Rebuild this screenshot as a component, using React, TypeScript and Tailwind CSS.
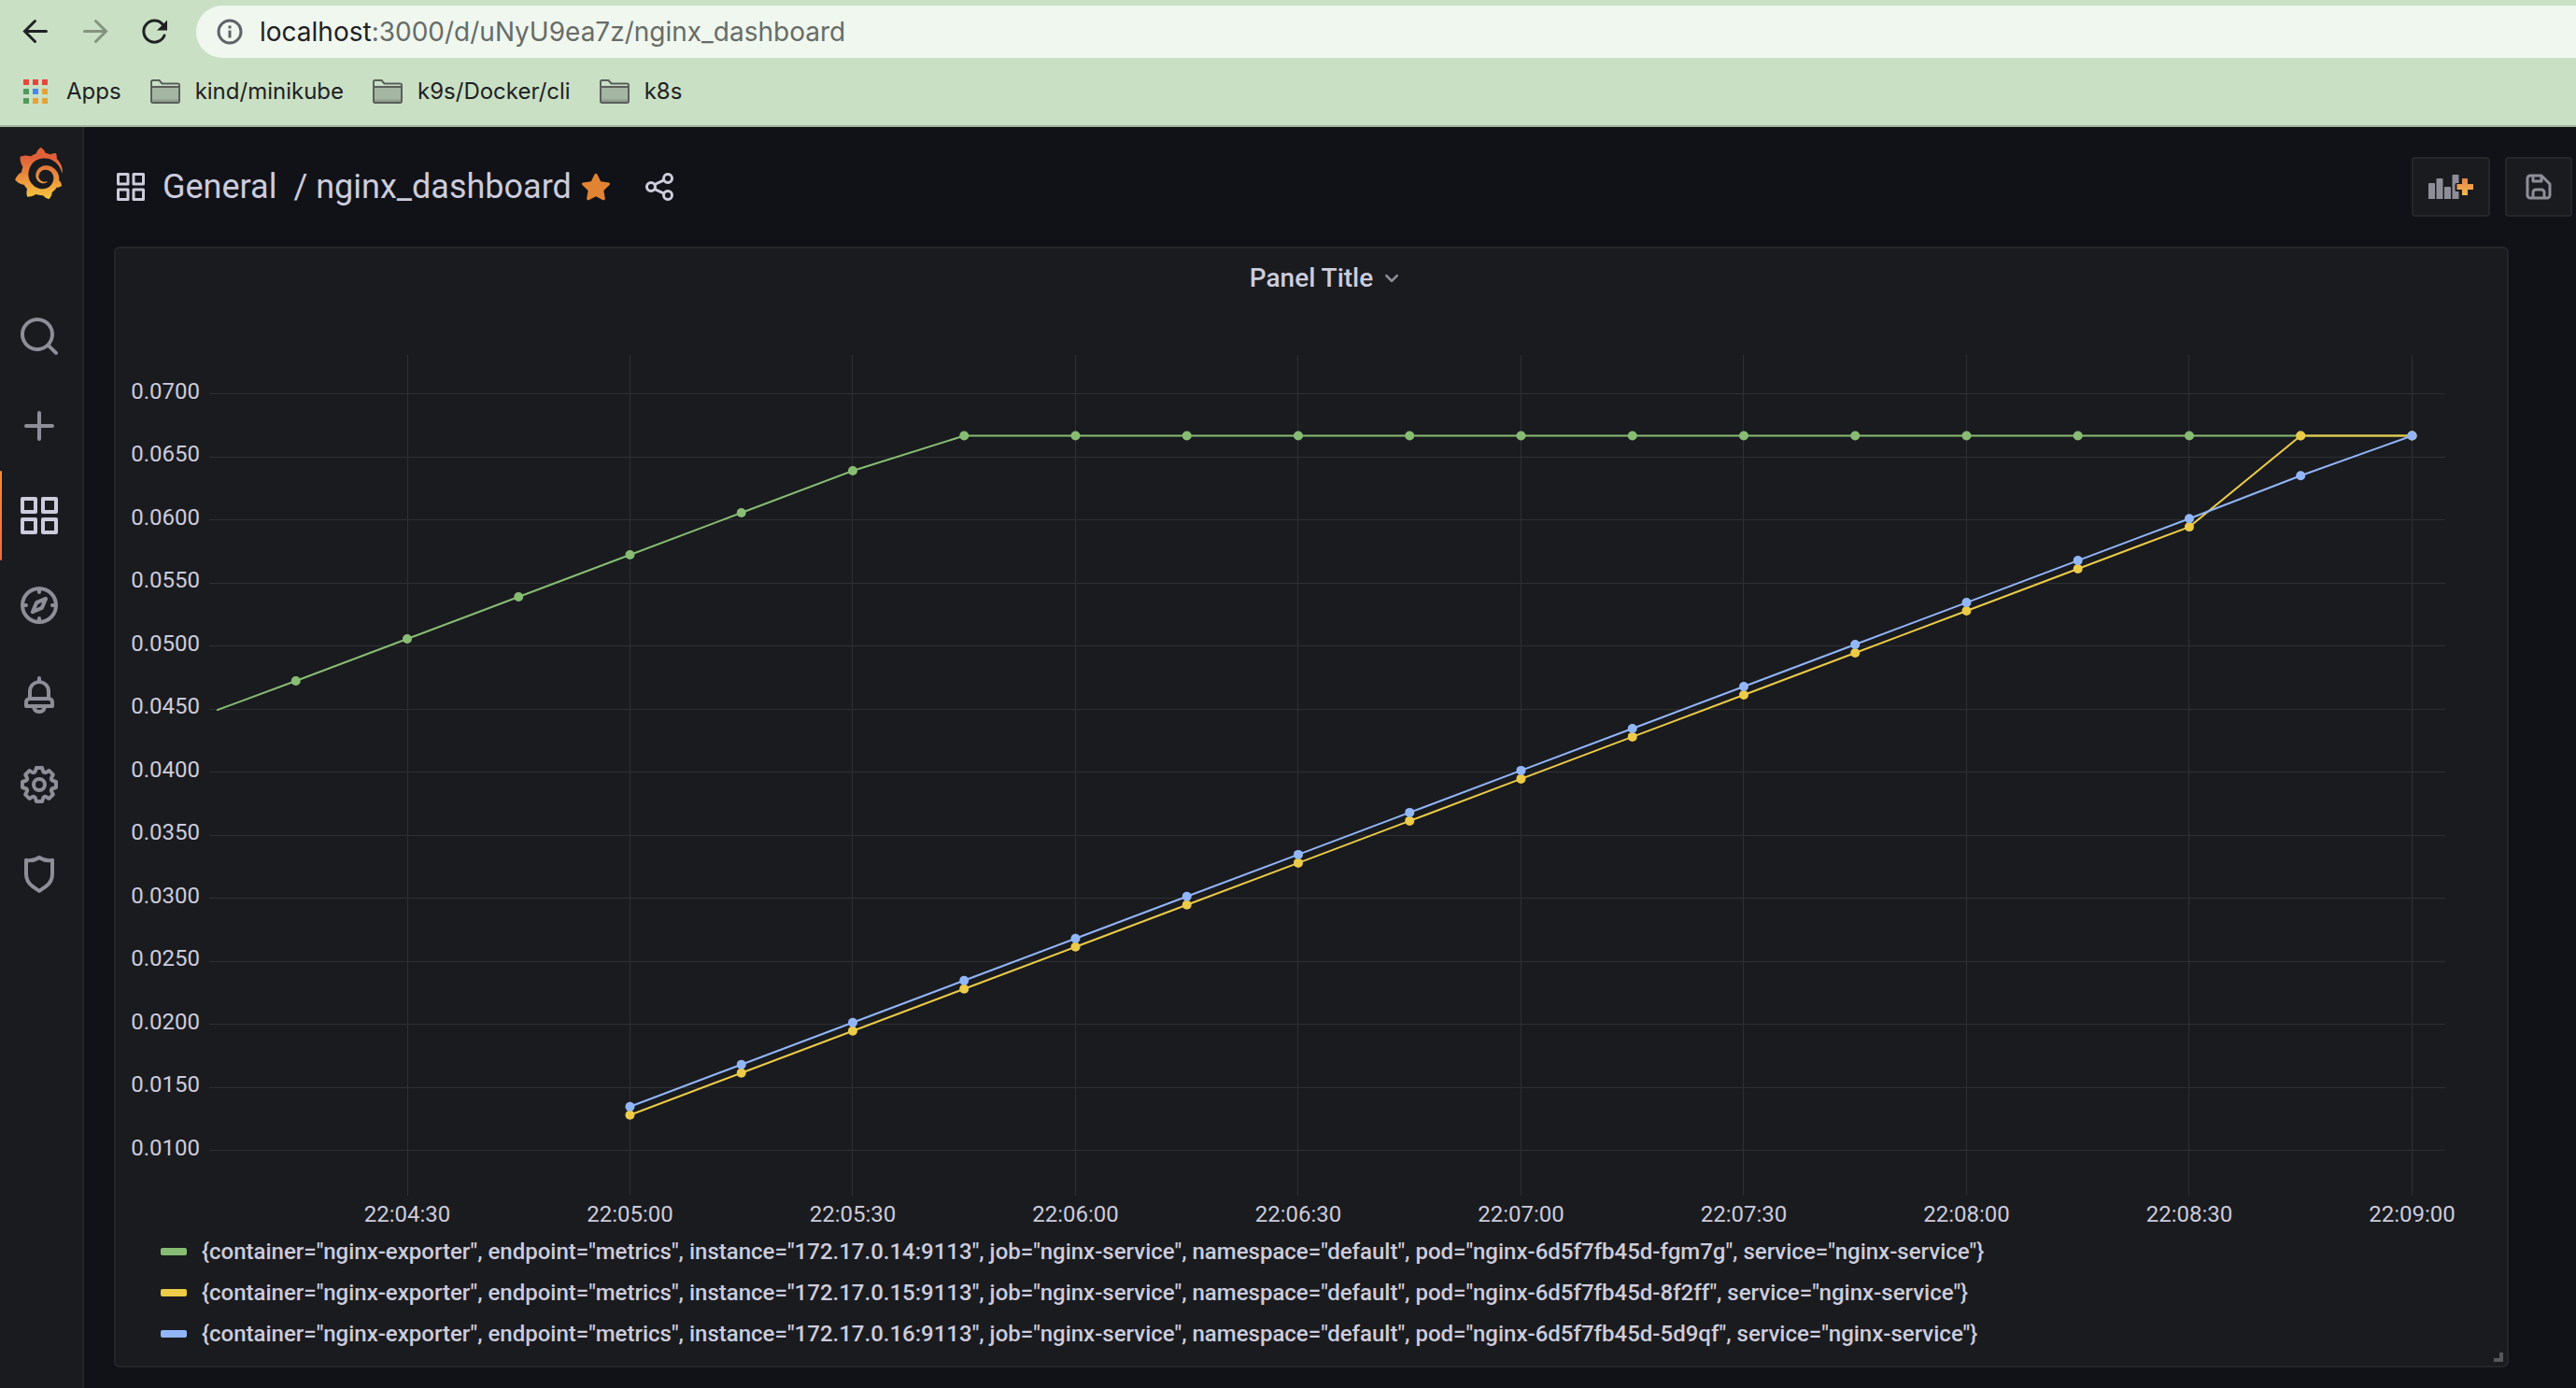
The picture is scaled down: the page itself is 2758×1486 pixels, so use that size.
import React from "react";
import { SiGrafana } from "react-icons/si";

const ICONS = {
  apps: "M10,13H3a1,1,0,0,0-1,1v7a1,1,0,0,0,1,1h7a1,1,0,0,0,1-1V14A1,1,0,0,0,10,13ZM9,20H4V15H9ZM21,2H14a1,1,0,0,0-1,1v7a1,1,0,0,0,1,1h7a1,1,0,0,0,1-1V3A1,1,0,0,0,21,2ZM20,9H15V4h5Zm1,4H14a1,1,0,0,0-1,1v7a1,1,0,0,0,1,1h7a1,1,0,0,0,1-1V14A1,1,0,0,0,21,13Zm-1,7H15V15h5ZM10,2H3A1,1,0,0,0,2,3v7a1,1,0,0,0,1,1h7a1,1,0,0,0,1-1V3A1,1,0,0,0,10,2ZM9,9H4V4H9Z",
  search:
    "M21.71,20.29,18,16.61A9,9,0,1,0,16.61,18l3.68,3.68a1,1,0,0,0,1.42,0A1,1,0,0,0,21.71,20.29ZM11,18a7,7,0,1,1,7-7A7,7,0,0,1,11,18Z",
  plus: "M19,11H13V5a1,1,0,0,0-2,0v6H5a1,1,0,0,0,0,2h6v6a1,1,0,0,0,2,0V13h6a1,1,0,0,0,0-2Z",
  compass:
    "M12,2A10,10,0,1,0,22,12,10,10,0,0,0,12,2Zm1,17.93V19a1,1,0,0,0-2,0v.93A8,8,0,0,1,4.07,13H5a1,1,0,0,0,0-2H4.07A8,8,0,0,1,11,4.07V5a1,1,0,0,0,2,0V4.07A8,8,0,0,1,19.93,11H19a1,1,0,0,0,0,2h.93A8,8,0,0,1,13,19.93ZM15.14,7.55l-5,2.12a1,1,0,0,0-.52.52l-2.12,5a1,1,0,0,0,.21,1.1,1,1,0,0,0,.7.3.93.93,0,0,0,.4-.09l5-2.12a1,1,0,0,0,.52-.52l2.12-5a1,1,0,0,0-1.31-1.31Zm-2.49,5.1-2.28,1,1-2.28,2.28-1Z",
  bell: "M18,13.18V10a6,6,0,0,0-5-5.91V3a1,1,0,0,0-2,0V4.09A6,6,0,0,0,6,10v3.18A3,3,0,0,0,4,16v2a1,1,0,0,0,1,1H8.14a4,4,0,0,0,7.72,0H19a1,1,0,0,0,1-1V16A3,3,0,0,0,18,13.18ZM8,10a4,4,0,0,1,8,0v3H8Zm4,10a2,2,0,0,1-1.72-1h3.44A2,2,0,0,1,12,20Zm6-3H6V16a1,1,0,0,1,1-1H17a1,1,0,0,1,1,1Z",
  cog: "M21.32,9.55l-1.89-.63.89-1.78A1,1,0,0,0,20.13,6L18,3.87a1,1,0,0,0-1.15-.19l-1.78.89-.63-1.89A1,1,0,0,0,13.5,2h-3a1,1,0,0,0-.95.68L8.92,4.57,7.14,3.68A1,1,0,0,0,6,3.87L3.87,6a1,1,0,0,0-.19,1.15l.89,1.78-1.89.63A1,1,0,0,0,2,10.5v3a1,1,0,0,0,.68.95l1.89.63-.89,1.78A1,1,0,0,0,3.87,18L6,20.13a1,1,0,0,0,1.15.19l1.78-.89.63,1.89a1,1,0,0,0,.95.68h3a1,1,0,0,0,.95-.68l.63-1.89,1.78.89A1,1,0,0,0,18,20.13L20.13,18a1,1,0,0,0,.19-1.15l-.89-1.78,1.89-.63A1,1,0,0,0,22,13.5v-3A1,1,0,0,0,21.32,9.55ZM20,12.78l-1.2.4A2,2,0,0,0,17.64,16l.57,1.14-1.1,1.1L16,17.64a2,2,0,0,0-2.79,1.16l-.4,1.2H11.22l-.4-1.2A2,2,0,0,0,8,17.64l-1.14.57-1.1-1.1L6.36,16A2,2,0,0,0,5.2,13.18L4,12.78V11.22l1.2-.4A2,2,0,0,0,6.36,8L5.79,6.89l1.1-1.1L8,6.36A2,2,0,0,0,10.82,5.2l.4-1.2h1.56l.4,1.2A2,2,0,0,0,16,6.36l1.14-.57,1.1,1.1L17.64,8a2,2,0,0,0,1.16,2.79l1.2.4ZM12,8a4,4,0,1,0,4,4A4,4,0,0,0,12,8Zm0,6a2,2,0,1,1,2-2A2,2,0,0,1,12,14Z",
  shield:
    "M19.63,3.65a1,1,0,0,0-.84-.2,8,8,0,0,1-6.22-1.27,1,1,0,0,0-1.14,0A8,8,0,0,1,5.21,3.45a1,1,0,0,0-.84.2A1,1,0,0,0,4,4.43v7.45a9,9,0,0,0,3.77,7.33l3.65,2.6a1,1,0,0,0,1.16,0l3.65-2.6A9,9,0,0,0,20,11.88V4.43A1,1,0,0,0,19.63,3.65ZM18,11.88a7,7,0,0,1-2.93,5.7L12,19.77,8.93,17.58A7,7,0,0,1,6,11.88V5.58a10,10,0,0,0,6-1.39,10,10,0,0,0,6,1.39Z",
  share:
    "M18,14a4,4,0,0,0-3.08,1.48l-5.1-2.35a3.64,3.64,0,0,0,0-2.26l5.1-2.35A4,4,0,1,0,14,6a4.17,4.17,0,0,0,.07.71L8.79,9.14a4,4,0,1,0,0,5.72l5.28,2.43A4.17,4.17,0,0,0,14,18a4,4,0,1,0,4-4ZM18,4a2,2,0,1,1-2,2A2,2,0,0,1,18,4ZM6,14a2,2,0,1,1,2-2A2,2,0,0,1,6,14Zm12,6a2,2,0,1,1,2-2A2,2,0,0,1,18,20Z",
  save: "M20.71,9.29l-6-6a1,1,0,0,0-.32-.21A1.09,1.09,0,0,0,14,3H6A3,3,0,0,0,3,6V18a3,3,0,0,0,3,3H18a3,3,0,0,0,3-3V10A1,1,0,0,0,20.71,9.29ZM9,5h4V7H9Zm6,14H9V16a1,1,0,0,1,1-1h4a1,1,0,0,1,1,1Zm4-1a1,1,0,0,1-1,1H17V16a3,3,0,0,0-3-3H10a3,3,0,0,0-3,3v3H6a1,1,0,0,1-1-1V6A1,1,0,0,1,6,5H7V8A1,1,0,0,0,8,9h6a1,1,0,0,0,1-1V6.41l4,4Z",
  angleDown:
    "M17,9.17a1,1,0,0,0-1.41,0L12,12.71,8.46,9.17a1,1,0,0,0-1.41,0,1,1,0,0,0,0,1.42l4.24,4.24a1,1,0,0,0,1.42,0L17,10.59A1,1,0,0,0,17,9.17Z",
  star: "M17.56 21.56a1 1 0 0 1-.46-.12L12 18.76l-5.1 2.68a1 1 0 0 1-1.45-1.05l.97-5.68-4.12-4.02a1 1 0 0 1 .55-1.7l5.7-.83 2.55-5.17a1.04 1.04 0 0 1 1.8 0l2.55 5.17 5.7.83a1 1 0 0 1 .55 1.7l-4.12 4.02.97 5.68a1 1 0 0 1-.99 1.17Z",
};

type IconName = keyof typeof ICONS;

function Icon({ name, className }: { name: IconName; className: string }) {
  return (
    <svg viewBox="0 0 24 24" fill="currentColor" aria-hidden="true" className={className}>
      <path d={ICONS[name]} />
    </svg>
  );
}

/* ---------- Browser chrome ---------- */

const APP_DOTS = ["#e8453c", "#e8453c", "#e8453c", "#4f9a5b", "#4688f1", "#e6a235", "#4f9a5b", "#e6a235", "#e6a235"];

function FolderIcon() {
  return (
    <svg viewBox="0 0 32 26" className="h-[26px] w-8" aria-hidden="true">
      <path d="M1 8V2.500A1.500 1.500 0 0 1 2.500 1h7L12.500 4.500h17A1.500 1.500 0 0 1 31 6V8" fill="none" stroke="#5b5e5b" strokeWidth="2" />
      <path d="M1 8h30V23.500A1.500 1.500 0 0 1 29.500 25H2.500A1.500 1.500 0 0 1 1 23.500Z" fill="#a5b6a3" stroke="#5b5e5b" strokeWidth="2" />
      <path d="M2 21.500h28V24H2Z" fill="#8f9e8d" />
    </svg>
  );
}

function BrowserChrome() {
  return (
    <header className="border-b-2 border-[#9fb29d] bg-[#c9e0c5] font-['Inter',sans-serif]">
      <div className="flex items-center pt-1.5">
        <div className="flex w-[210px] shrink-0 items-center gap-8 pl-[22px]">
          <button aria-label="Back" className="text-[#202124]">
            <svg viewBox="0 0 32 32" className="size-8" fill="none" stroke="currentColor" strokeWidth="3" strokeLinecap="round" aria-hidden="true">
              <path d="M27.500 15.500H5M15.500 4.500 4.500 15.500 15.500 26.500" />
            </svg>
          </button>
          <button aria-label="Forward" className="text-[#84937f]">
            <svg viewBox="0 0 32 32" className="size-8" fill="none" stroke="currentColor" strokeWidth="3" strokeLinecap="round" aria-hidden="true">
              <path d="M4.500 15.500H27M16.500 4.500 27.500 15.500 16.500 26.500" />
            </svg>
          </button>
          <button aria-label="Reload" className="text-[#202124]">
            <svg viewBox="0 0 32 32" className="size-8" aria-hidden="true">
              <path d="M26 20A11.500 11.500 0 1 1 24 8" fill="none" stroke="currentColor" strokeWidth="3" strokeLinecap="round" />
              <path d="M29 3.500v11H18Z" fill="currentColor" />
            </svg>
          </button>
        </div>
        <div className="flex h-14 grow items-center gap-[18px] rounded-l-full bg-[#f0f7ef] pl-[22px]">
          <svg viewBox="0 0 28 28" className="size-7" fill="none" stroke="#5f6368" strokeWidth="3" aria-hidden="true">
            <circle cx="14" cy="14" r="12" />
            <path d="M14 12.500v8M14 7.500v3" />
          </svg>
          <p className="text-[28px] leading-8 text-[#676c67]">
            <span className="text-[#202124]">localhost</span>:3000/d/uNyU9ea7z/nginx_dashboard
          </p>
        </div>
      </div>
      <nav aria-label="Bookmarks" className="flex h-[72px] items-center gap-[31px] pl-[25px] text-2xl text-[#202124]">
        <a href="#apps" className="flex items-center gap-5">
          <span className="grid grid-cols-3 gap-1">
            {APP_DOTS.map((color, i) => (
              <span key={i} className="size-1.5" style={{ backgroundColor: color }} />
            ))}
          </span>
          Apps
        </a>
        {["kind/minikube", "k9s/Docker/cli", "k8s"].map((label) => (
          <button key={label} className="flex items-center gap-4">
            <FolderIcon />
            {label}
          </button>
        ))}
      </nav>
    </header>
  );
}

/* ---------- Side menu ---------- */

const MENU: { icon: IconName; label: string; active?: boolean }[] = [
  { icon: "search", label: "Search" },
  { icon: "plus", label: "Create" },
  { icon: "apps", label: "Dashboards", active: true },
  { icon: "compass", label: "Explore" },
  { icon: "bell", label: "Alerting" },
  { icon: "cog", label: "Configuration" },
  { icon: "shield", label: "Server Admin" },
];

function SideMenu() {
  return (
    <nav aria-label="Main" className="w-[90px] shrink-0 border-r-2 border-[#25262a] bg-[#1a1b1f]">
      <a href="#home" aria-label="Grafana home" className="flex h-[176px] pt-[22px] pl-[14px]">
        <svg width="0" height="0" aria-hidden="true">
          <linearGradient id="flame" x1="0" y1="0" x2="0" y2="1">
            <stop offset="0.2" stopColor="#e0603a" />
            <stop offset="1" stopColor="#f5c63f" />
          </linearGradient>
        </svg>
        <SiGrafana className="size-[55px]" style={{ fill: "url(#flame)" }} />
      </a>
      <ul>
        {MENU.map(({ icon, label, active }) => (
          <li key={icon} className="relative">
            {active && <span className="absolute inset-y-0 left-0 w-0.5 rounded-sm bg-linear-to-b from-[#f08e3c] to-[#ee6a48]" />}
            <a
              href={"#" + icon}
              aria-label={label}
              className={"flex h-24 items-center pl-[18px] " + (active ? "text-[#ccccdc]" : "text-[#8e8e99]")}
            >
              <Icon name={icon} className="size-12" />
            </a>
          </li>
        ))}
      </ul>
    </nav>
  );
}

/* ---------- Toolbar ---------- */

function AddPanelIcon() {
  return (
    <svg viewBox="0 0 48 26" className="h-[26px] w-12" aria-hidden="true">
      <linearGradient id="add" x1="0" y1="0" x2="0" y2="1">
        <stop offset="0" stopColor="#e6814a" />
        <stop offset="1" stopColor="#f2bb4b" />
      </linearGradient>
      <path
        fill="#8e8e99"
        d="M1 9h5a1 1 0 0 1 1 1v16H0V10a1 1 0 0 1 1-1ZM9.500 4h5a1 1 0 0 1 1 1v21h-7V5a1 1 0 0 1 1-1ZM18 13h5a1 1 0 0 1 1 1v12h-7V14a1 1 0 0 1 1-1ZM26.500 0h5a1 1 0 0 1 1 1v8H30a1.500 1.500 0 0 0-1.500 1.500v6A1.500 1.500 0 0 0 30 18h2.500v8h-7V1a1 1 0 0 1 1-1Z"
      />
      <path fill="url(#add)" d="M36 4h6v6h6v6h-6v6h-6v-6h-5.500v-6H36Z" />
    </svg>
  );
}

function Toolbar() {
  return (
    <div className="flex h-32 items-center pr-1 pl-8 text-[#ccccdc]">
      <Icon name="apps" className="size-9" />
      <h1 className="flex gap-[18px] pl-4 text-[36px] leading-10">
        <a href="#general">General</a>
        <a href="#dashboard">/ nginx_dashboard</a>
      </h1>
      <button aria-label="Unmark as favorite" className="ml-2 text-[#e08433]">
        <Icon name="star" className="size-9" />
      </button>
      <button aria-label="Share dashboard" className="ml-8">
        <Icon name="share" className="size-9" />
      </button>
      <div className="ml-auto flex gap-4">
        <button aria-label="Add panel" className="flex h-16 w-[84px] items-center justify-center rounded border-2 border-[#25262a] bg-[#1a1b1f]">
          <AddPanelIcon />
        </button>
        <button
          aria-label="Save dashboard"
          className="flex h-16 w-[72px] items-center justify-center rounded border-2 border-[#25262a] bg-[#1a1b1f] text-[#8e8e99]"
        >
          <Icon name="save" className="size-9" />
        </button>
      </div>
    </div>
  );
}

/* ---------- Chart ---------- */

// Times are seconds after 22:04:30; one sample is taken every 15 seconds.
const T_START = -25.66;
const T_SPAN = 300.13;
const PLOT_W = 2386;
const PLOT_H = 900;
const STEP = 15;
const FULL = 0.06667;

const ramp = (from: number, to: number, count: number) =>
  Array.from({ length: count }, (_, i) => from + ((to - from) * i) / (count - 1));

const SERIES = [
  {
    color: "#87bd73",
    start: -15,
    lead: [T_START, 0.0449],
    values: [...ramp(0.04722, 0.06389, 6), ...Array<number>(14).fill(FULL)],
    pod: "fgm7g",
    ip: "172.17.0.14",
  },
  { color: "#eccb48", start: 30, values: [...ramp(0.0128, 0.05944, 15), FULL, FULL], pod: "8f2ff", ip: "172.17.0.15" },
  { color: "#92b6fa", start: 30, values: [...ramp(0.01347, 0.0601, 15), 0.0635, FULL], pod: "5d9qf", ip: "172.17.0.16" },
];

const fx = (t: number) => (t - T_START) / T_SPAN;
const pct = (t: number) => `${(fx(t) * 100).toFixed(3)}%`;
const py = (v: number) => Math.round(((0.07 - v) / 0.005) * 675 + 415) / 10;

const X_TICKS = Array.from({ length: 10 }, (_, i) => {
  const s = 270 + i * 30;
  return { t: i * 30, label: `22:0${Math.floor(s / 60)}:${s % 60 === 0 ? "00" : "30"}` };
});
const Y_TICKS = Array.from({ length: 13 }, (_, i) => 0.07 - i * 0.005);

function Chart() {
  return (
    <div className="pr-[66px] pl-[108px]">
      <svg className="block h-[938px] w-full overflow-visible" role="img" aria-label="Requests over time per pod">
        <g stroke="#2e2f33" shapeRendering="crispEdges">
          {X_TICKS.map(({ t }) => (
            <line key={t} x1={pct(t)} x2={pct(t)} y1="0" y2={PLOT_H} />
          ))}
          {Y_TICKS.map((v) => (
            <line key={v} x1="-8" x2="100%" y1={py(v)} y2={py(v)} />
          ))}
        </g>
        <g fill="#ccccdc" className="text-2xl">
          {Y_TICKS.map((v) => (
            <text key={v} x="-18" y={py(v) + 5} textAnchor="end">
              {v.toFixed(4)}
            </text>
          ))}
          {X_TICKS.map(({ t, label }) => (
            <text key={label} x={pct(t)} y={PLOT_H + 28} textAnchor="middle">
              {label}
            </text>
          ))}
        </g>
        {SERIES.map(({ color, start, lead, values }) => {
          const pts = values.map((v, i) => [start + i * STEP, v]);
          const line = lead ? [lead, ...pts] : pts;
          return (
            <g key={color}>
              <svg width="100%" height={PLOT_H} viewBox={`0 0 ${PLOT_W} ${PLOT_H}`} preserveAspectRatio="none">
                <polyline
                  points={line.map(([t, v]) => `${(fx(t) * PLOT_W).toFixed(1)},${py(v)}`).join(" ")}
                  fill="none"
                  stroke={color}
                  strokeWidth="2"
                  vectorEffect="non-scaling-stroke"
                />
              </svg>
              {pts.map(([t, v]) => (
                <circle key={t} cx={pct(t)} cy={py(v)} r="5" fill={color} />
              ))}
            </g>
          );
        })}
      </svg>
    </div>
  );
}

function Legend() {
  return (
    <ul className="pb-3 pl-12 text-2xl leading-[44px] font-medium text-[#ccccdc]">
      {SERIES.map(({ color, pod, ip }) => (
        <li key={pod} className="flex items-center gap-4">
          <span className="h-2 w-7 shrink-0 rounded-xs" style={{ backgroundColor: color }} />
          <button className="text-left">
            {`{container="nginx-exporter", endpoint="metrics", instance="${ip}:9113", job="nginx-service", namespace="default", pod="nginx-6d5f7fb45d-${pod}", service="nginx-service"}`}
          </button>
        </li>
      ))}
    </ul>
  );
}

export default function App() {
  return (
    <div className="flex min-h-screen flex-col bg-[#111217] font-['Roboto',sans-serif]">
      <BrowserChrome />
      <div className="flex grow">
        <SideMenu />
        <main className="min-w-0 grow">
          <Toolbar />
          <section className="relative mr-[72px] ml-8 rounded-md border-2 border-[#25262a] bg-[#1a1b1f]">
            <h2 className="mb-[50px] flex h-16 items-center justify-center pl-9">
              <button className="flex items-center gap-1 text-[28px] leading-8 font-medium text-[#ccccdc]">
                Panel Title
                <Icon name="angleDown" className="size-8 text-[#8e8e99]" />
              </button>
            </h2>
            <Chart />
            <Legend />
            <span className="absolute right-1 bottom-1 size-2.5 border-r-4 border-b-4 border-[#55575b]" />
          </section>
        </main>
      </div>
    </div>
  );
}
